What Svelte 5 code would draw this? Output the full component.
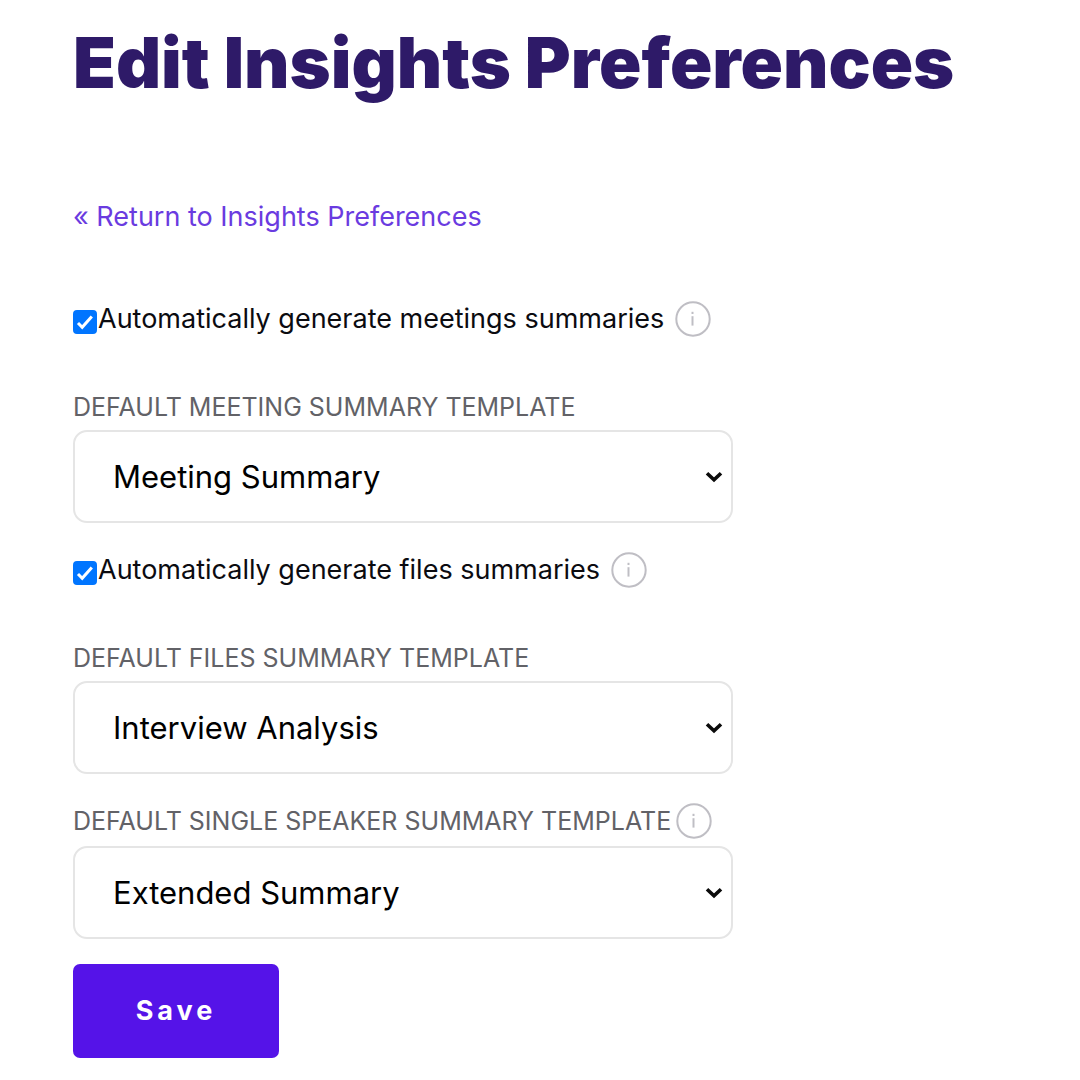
<script>
  const templates = ['Meeting Summary', 'Interview Analysis', 'Extended Summary'];

  let meetingsEnabled = true;
  let filesEnabled = true;
  let meetingTemplate = 'Meeting Summary';
  let filesTemplate = 'Interview Analysis';
  let speakerTemplate = 'Extended Summary';
</script>

{#snippet infoIcon()}
  <svg class="info" viewBox="0 0 36 36" aria-hidden="true">
    <circle cx="18" cy="18" r="16.7" />
    <path d="M17.5 15.2v9.4" />
    <path d="M17.5 10.8v2.2" />
  </svg>
{/snippet}

{#snippet tick()}
  <svg class="tick" viewBox="0 0 24 24" aria-hidden="true">
    <path d="M5 13l4.2 4.2L18.8 6.4" />
  </svg>
{/snippet}

{#snippet chevron()}
  <svg class="chevron" viewBox="0 0 18 12" aria-hidden="true">
    <path d="M2 2.2l7 6.6 7-6.6" />
  </svg>
{/snippet}

<main class="page">
  <h1>Edit Insights Preferences</h1>
  <a class="return" href="#preferences">« Return to Insights Preferences</a>

  <form on:submit|preventDefault>
    <div class="option">
      <span class="checkbox">
        <input type="checkbox" id="auto-meetings" bind:checked={meetingsEnabled} />
        {@render tick()}
      </span>
      <label for="auto-meetings">Automatically generate meetings summaries</label>
      {@render infoIcon()}
    </div>

    <div class="field">
      <label class="caption" for="meeting-template">Default meeting summary template</label>
      <div class="select">
        <select id="meeting-template" bind:value={meetingTemplate}>
          {#each templates as template}
            <option>{template}</option>
          {/each}
        </select>
        {@render chevron()}
      </div>
    </div>

    <div class="option">
      <span class="checkbox">
        <input type="checkbox" id="auto-files" bind:checked={filesEnabled} />
        {@render tick()}
      </span>
      <label for="auto-files">Automatically generate files summaries</label>
      {@render infoIcon()}
    </div>

    <div class="field">
      <label class="caption" for="files-template">Default files summary template</label>
      <div class="select">
        <select id="files-template" bind:value={filesTemplate}>
          {#each templates as template}
            <option>{template}</option>
          {/each}
        </select>
        {@render chevron()}
      </div>
    </div>

    <div class="field">
      <div class="caption-row">
        <label class="caption" for="speaker-template">Default single speaker summary template</label>
        {@render infoIcon()}
      </div>
      <div class="select">
        <select id="speaker-template" bind:value={speakerTemplate}>
          {#each templates as template}
            <option>{template}</option>
          {/each}
        </select>
        {@render chevron()}
      </div>
    </div>

    <button type="submit">Save</button>
  </form>
</main>

<style>
  :global(body) {
    margin: 0;
    background: #fff;
  }

  .page {
    box-sizing: border-box;
    padding: 19px 73px 22px;
    font-family: Inter, 'Liberation Sans', sans-serif;
    font-size: 27px;
    line-height: 32px;
    color: #0b0b10;
  }

  h1 {
    margin: 0 0 94px;
    font-size: 70px;
    line-height: 88px;
    font-weight: 900;
    color: #2e1a68;
  }

  .return {
    display: block;
    width: fit-content;
    color: #6a3be0;
    text-decoration: none;
  }

  form {
    max-width: 660px;
    margin-top: 68px;
  }

  .option,
  .caption-row {
    display: flex;
    align-items: center;
    gap: 9px;
    height: 36px;
  }

  .caption-row {
    gap: 5px;
  }

  .option {
    margin-bottom: 54px;
  }

  .checkbox {
    display: grid;
    align-self: flex-end;
    width: 24px;
    height: 24px;
    margin: 0 -8px 3px 0;
  }

  .checkbox input,
  .tick {
    grid-area: 1 / 1;
    width: 24px;
    height: 24px;
    margin: 0;
  }

  .checkbox input {
    appearance: none;
    border: 2px solid #767676;
    border-radius: 4px;
    background: #fff;
  }

  .checkbox input:checked {
    border-color: #0075ff;
    background: #0075ff;
  }

  .tick {
    fill: none;
    stroke: #fff;
    stroke-width: 3;
    pointer-events: none;
  }

  .info {
    flex: none;
    width: 36px;
    height: 36px;
    fill: none;
    stroke: #bfbec4;
    stroke-width: 2;
  }

  .option .info {
    margin-left: 2px;
  }

  .field {
    margin-bottom: 29px;
  }

  .caption {
    display: block;
    font-size: 25px;
    text-transform: uppercase;
    color: #626267;
  }

  .select {
    display: grid;
    align-items: center;
    margin-top: 7px;
  }

  select {
    grid-area: 1 / 1;
    box-sizing: border-box;
    width: 100%;
    height: 93px;
    padding: 0 48px 0 38px;
    appearance: none;
    border: 2px solid #e5e5e5;
    border-radius: 14px;
    background: #fff;
    font: inherit;
    font-size: 31px;
    line-height: 44px;
    color: #000;
  }

  .chevron {
    grid-area: 1 / 1;
    justify-self: end;
    width: 18px;
    height: 12px;
    margin-right: 10px;
    fill: none;
    stroke: #0b0b0b;
    stroke-width: 3.6;
    pointer-events: none;
  }

  .field:last-of-type {
    margin-bottom: 25px;
  }

  button {
    display: block;
    min-width: 206px;
    height: 94px;
    padding: 0 60px;
    border: 0;
    border-radius: 7px;
    background: #5513e8;
    font: inherit;
    font-size: 27px;
    font-weight: 700;
    letter-spacing: 4px;
    color: #fff;
  }
</style>
